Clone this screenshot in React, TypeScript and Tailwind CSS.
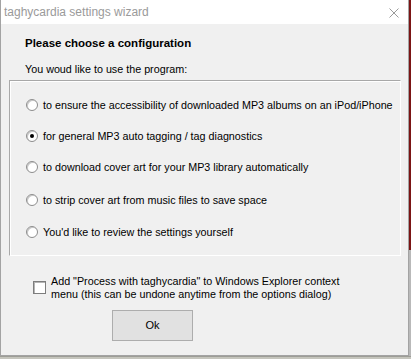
const options = [
  { label: "to ensure the accessibility of downloaded MP3 albums on an iPod/iPhone", checked: false, mt: "mt-[17px]" },
  { label: "for general MP3 auto tagging / tag diagnostics", checked: true, mt: "mt-[17px]" },
  { label: "to download cover art for your MP3 library automatically", checked: false, mt: "mt-[17px]" },
  { label: "to strip cover art from music files to save space", checked: false, mt: "mt-[19px]" },
  { label: "You'd like to review the settings yourself", checked: false, mt: "mt-[18px]" },
]

const Radio = ({ checked }: { checked: boolean }) => (
  <span className="w-[12px] h-[12px] shrink-0 rounded-full border border-[#8d8d8d] bg-white flex items-center justify-center shadow-[inset_1px_1px_0_#c8c8c8]">
    {checked && <span className="w-[4px] h-[4px] rounded-full bg-black" />}
  </span>
)

const App = () => {
  return (
    <div className="w-[411px] h-[359px] bg-[#c9c9c2] flex flex-col overflow-hidden font-['Liberation_Sans',Arial,sans-serif]">
      <div className="flex h-[356px]">
        <div className="w-[409px] h-[356px] flex flex-col border-l border-r border-b border-[#a3a3a3] bg-[#f0f0f0]">
          <div className="h-[24px] bg-white flex items-center justify-between pl-[3px] pr-[9px]">
            <span className="text-[12px] text-[#9a9a9a]">taghycardia settings wizard</span>
            <svg width="10" height="10" viewBox="0 0 10 10" className="mt-[1px]">
              <path d="M0.5 0.5 L9.5 9.5 M9.5 0.5 L0.5 9.5" stroke="#9a9a9a" strokeWidth="1" fill="none" />
            </svg>
          </div>

          <div className="flex flex-col text-black">
            <h2 className="mt-[12px] ml-[24px] text-[11.5px] font-bold leading-[14px]">Please choose a configuration</h2>
            <p className="mt-[12px] ml-[24px] text-[10.75px] leading-[14px]">You woud like to use the program:</p>

            <div className="mt-[4px] ml-[8px] w-[392px] h-[176px] border-t border-l border-[#a8a8a8] border-r border-b border-r-white border-b-white shadow-[inset_1px_1px_0_#ffffff] flex flex-col pl-[16px]">
              {options.map(opt => (
                <label key={opt.label} className={`${opt.mt} h-[14px] flex items-center gap-[5px] text-[10.75px] leading-[14px] whitespace-nowrap`}>
                  <Radio checked={opt.checked} />
                  <span>{opt.label}</span>
                </label>
              ))}
            </div>

            <div className="mt-[19px] ml-[32px] flex items-start gap-[5px]">
              <span className="mt-[6px] w-[13px] h-[13px] shrink-0 bg-white border border-[#7d7d7d] shadow-[inset_1px_1px_0_#b5b5b5]" />
              <p className="text-[10.75px] leading-[13px] w-[300px]">
                Add "Process with taghycardia" to Windows Explorer context menu (this can be undone anytime from the options dialog)
              </p>
            </div>

            <button className="mt-[9px] ml-[111px] w-[81px] h-[31px] bg-[#e1e1e1] border border-[#adadad] text-[11px] text-black">
              Ok
            </button>
          </div>
        </div>
        <div className="w-[2px] flex flex-col">
          <div className="h-[250px] bg-[#7b1515]" />
          <div className="flex-1 bg-[#b9b9b9]" />
        </div>
      </div>
      <div className="h-[3px] bg-[#c5c5bd] border-t border-[#9d9d96]" />
    </div>
  )
}

export default App
